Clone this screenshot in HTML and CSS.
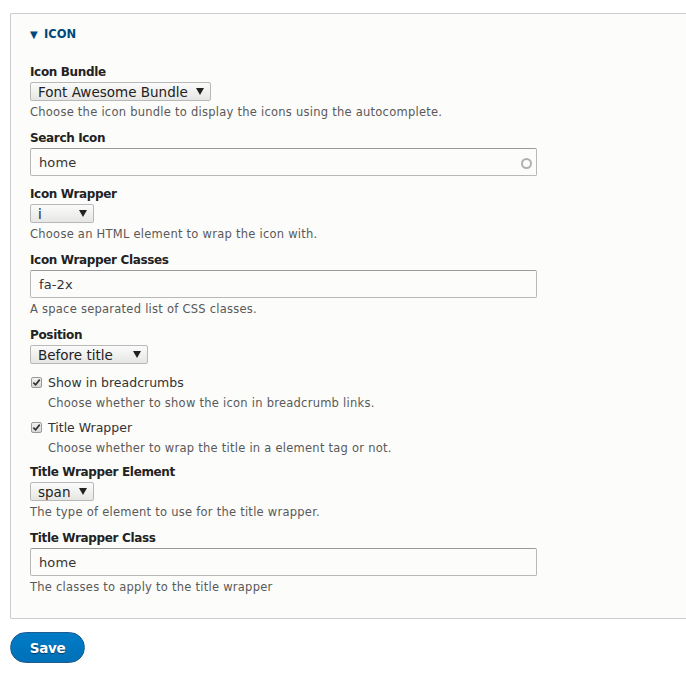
FILE: index.html
```html
<!DOCTYPE html>
<html>
<head>
<meta charset="utf-8">
<link rel="stylesheet" href="styles.css">
</head>
<body>
<div class="page">
  <fieldset class="panel">
    <div class="legend"><span class="legend-arrow">▼</span><span class="legend-text">Icon</span></div>
    <div class="panel-body">
      <div class="item">
        <div class="label">Icon Bundle</div>
        <div class="select select-bundle"><span class="select-text">Font Awesome Bundle</span><span class="caret"></span></div>
        <div class="desc">Choose the icon bundle to display the icons using the autocomplete.</div>
      </div>
      <div class="item">
        <div class="label">Search Icon</div>
        <div class="input-wrap">
          <div class="input">home</div>
          <span class="throbber"></span>
        </div>
      </div>
      <div class="item">
        <div class="label">Icon Wrapper</div>
        <div class="select select-short"><span class="select-text">i</span><span class="caret"></span></div>
        <div class="desc">Choose an HTML element to wrap the icon with.</div>
      </div>
      <div class="item">
        <div class="label">Icon Wrapper Classes</div>
        <div class="input">fa-2x</div>
        <div class="desc">A space separated list of CSS classes.</div>
      </div>
      <div class="item">
        <div class="label">Position</div>
        <div class="select select-pos"><span class="select-text">Before title</span><span class="caret"></span></div>
      </div>
      <div class="item">
        <div class="check-row"><span class="checkbox"><svg viewBox="0 0 10 10" width="9" height="9"><path d="M1.5 5.2 L4 7.6 L8.6 1.8" fill="none" stroke="#333" stroke-width="1.9"/></svg></span><span class="check-label">Show in breadcrumbs</span></div>
        <div class="desc desc-indent">Choose whether to show the icon in breadcrumb links.</div>
      </div>
      <div class="item">
        <div class="check-row"><span class="checkbox"><svg viewBox="0 0 10 10" width="9" height="9"><path d="M1.5 5.2 L4 7.6 L8.6 1.8" fill="none" stroke="#333" stroke-width="1.9"/></svg></span><span class="check-label">Title Wrapper</span></div>
        <div class="desc desc-indent">Choose whether to wrap the title in a element tag or not.</div>
      </div>
      <div class="item">
        <div class="label">Title Wrapper Element</div>
        <div class="select select-short"><span class="select-text">span</span><span class="caret"></span></div>
        <div class="desc">The type of element to use for the title wrapper.</div>
      </div>
      <div class="item">
        <div class="label">Title Wrapper Class</div>
        <div class="input">home</div>
        <div class="desc">The classes to apply to the title wrapper</div>
      </div>
    </div>
  </fieldset>
  <div class="actions">
    <button class="save">Save</button>
  </div>
</div>
</body>
</html>
```
FILE: styles.css
```css
html, body {
  margin: 0;
  padding: 0;
  background: #ffffff;
  overflow: hidden;
}
body {
  font-family: "DejaVu Sans", "Liberation Sans", sans-serif;
  color: #333333;
}
.page {
  padding: 13px 0 0 10px;
}
.panel {
  margin: 0;
  padding: 0;
  border: 1px solid #cccccc;
  border-right: none;
  border-radius: 2px 0 0 2px;
  background: #fcfcfa;
  min-width: 0;
}
.legend {
  display: flex;
  align-items: center;
  padding: 12px 0 0 19px;
  height: 16px;
  color: #00497a;
  font-weight: bold;
  font-size: 11.5px;
}
.legend-arrow {
  font-size: 10px;
  width: 14px;
}
.legend-text {
  text-transform: uppercase;
}
.panel-body {
  display: flex;
  flex-direction: column;
  gap: 10px;
  padding: 22px 0 23px 19px;
}
.item {
  display: flex;
  flex-direction: column;
  align-items: flex-start;
}
.label {
  font-weight: bold;
  font-size: 12px;
  letter-spacing: -0.35px;
  line-height: 16px;
  height: 16px;
  margin-bottom: 2px;
  color: #222;
}
.select {
  display: flex;
  align-items: center;
  justify-content: space-between;
  box-sizing: border-box;
  height: 19px;
  padding: 0 6px 0 7px;
  border: 1px solid #b8b8b8;
  border-radius: 2px;
  background: linear-gradient(#fbfbfb, #e6e6e4);
  font-size: 13.5px;
  color: #222;
}
.select-bundle { width: 181px; }
.select-short { width: 64px; }
.select-pos { width: 118px; }
.caret {
  width: 0;
  height: 0;
  border-left: 4.5px solid transparent;
  border-right: 4.5px solid transparent;
  border-top: 7px solid #222;
}
.desc {
  font-size: 11.5px;
  letter-spacing: 0.25px;
  line-height: 16px;
  height: 16px;
  margin-top: 3px;
  color: #595959;
}
.desc-indent {
  padding-left: 18px;
  margin-top: 5px;
  margin-bottom: -2px;
}
.input-wrap {
  position: relative;
  width: 507px;
}
.input {
  box-sizing: border-box;
  width: 507px;
  height: 28px;
  padding: 0 8px;
  display: flex;
  align-items: center;
  border: 1px solid #b8b8b8;
  border-top-color: #999999;
  border-radius: 2px;
  background: #fcfcfa;
  font-size: 13px;
  letter-spacing: 0.1px;
  color: #333;
}
.throbber {
  position: absolute;
  right: 5px;
  top: 10px;
  width: 7px;
  height: 7px;
  border: 2px solid #b0b0b0;
  border-radius: 50%;
}
.check-row {
  display: flex;
  align-items: center;
  height: 16px;
  font-size: 12.5px;
}
.checkbox {
  box-sizing: border-box;
  width: 11px;
  height: 11px;
  margin: 0 6px 0 1px;
  border: 1px solid #9a9a9a;
  border-radius: 2px;
  background: linear-gradient(#f2f2f2, #d8d8d8);
  display: flex;
  align-items: center;
  justify-content: center;
}
.check-label {
  color: #333;
}
.actions {
  padding: 13px 0 0 0;
}
.save {
  box-sizing: border-box;
  width: 75px;
  height: 31px;
  border: 1px solid #1e5c90;
  border-radius: 20px;
  background: linear-gradient(#007bc6, #0071b8);
  color: #ffffff;
  font-family: "DejaVu Sans", "Liberation Sans", sans-serif;
  font-weight: bold;
  font-size: 13.5px;
  letter-spacing: -0.3px;
  text-shadow: 0 1px 1px rgba(0,0,0,0.5);
  padding: 0;
}
```
